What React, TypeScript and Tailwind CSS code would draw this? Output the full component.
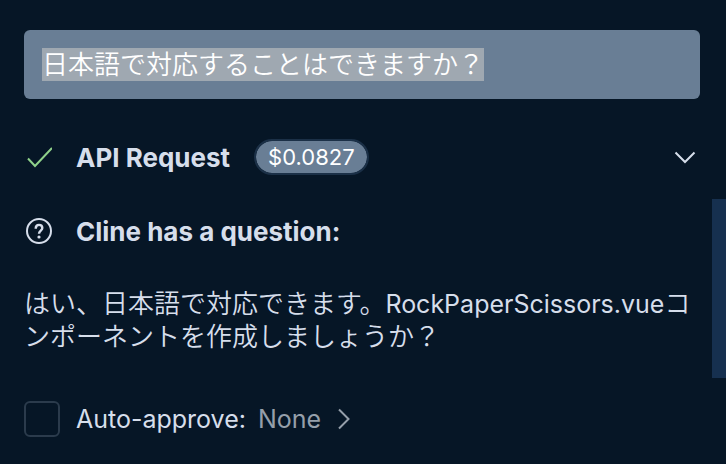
import React from "react";

function CheckIcon() {
  return (
    <svg width="28" height="24" viewBox="0 0 28 24" fill="none" stroke="#8fd18a" strokeWidth="2" aria-hidden="true">
      <path d="M4 13.500 L11 21 L28 3" />
    </svg>
  );
}

function QuestionIcon() {
  return (
    <svg width="30" height="28" viewBox="0 0 30 28" fill="none" stroke="#d6deeb" strokeWidth="2" aria-hidden="true">
      <circle cx="15" cy="14" r="12" />
      <path d="M11.700 11.700 C11.700 9.200 13 7.900 15 7.900 C17 7.900 18.300 9.300 18.300 11 C18.300 13.600 15 13.600 15 16.800" strokeWidth="2.400" />
      <circle cx="15" cy="20" r="1.600" fill="#d6deeb" stroke="none" />
    </svg>
  );
}

function ChevronDown() {
  return (
    <svg width="22" height="14" viewBox="0 0 22 14" fill="none" stroke="#d6deeb" strokeWidth="2" aria-hidden="true">
      <path d="M1.500 2.500 L11 12 L20.500 2.500" />
    </svg>
  );
}

function ChevronRight() {
  return (
    <svg width="14" height="22" viewBox="0 0 14 22" fill="none" stroke="#959faa" strokeWidth="2" aria-hidden="true">
      <path d="M2 1.500 L11.500 11 L2 20.500" />
    </svg>
  );
}

export default function App() {
  return (
    <div className="flex min-h-screen bg-[#061626] font-['Inter','Noto_Sans_CJK_JP',sans-serif] text-[26px] leading-[33px] text-[#d6deeb]">
      <main className="min-w-0 flex-1 pt-[30px] pl-6">
        <div className="mr-3 rounded-md bg-[#697e95] p-[18px] font-[350] text-white">
          <span className="inline-block bg-[#9fa8b1] align-top">日本語で対応することはできますか？</span>
        </div>

        <div className="mt-10 mr-3 flex h-9 items-center">
          <div className="flex w-[52px] shrink-0">
            <CheckIcon />
          </div>
          <h2 className="font-bold">API Request</h2>
          <span className="ml-6 rounded-full border-2 border-[#1b3047] bg-[#697e95] bg-clip-padding px-3 text-[22px] leading-8 text-white">
            $0.0827
          </span>
          <button type="button" aria-label="Expand request" className="ml-auto p-1">
            <ChevronDown />
          </button>
        </div>

        <div className="mt-[38px] mr-3 flex h-9 items-center">
          <div className="flex w-[52px] shrink-0">
            <QuestionIcon />
          </div>
          <h2 className="font-bold">Cline has a question:</h2>
        </div>

        <p className="mt-[38px] mr-2 font-[350] break-all">
          はい、日本語で対応できます。<span className="text-[25px] leading-none font-normal">RockPaperScissors.vue</span>コンポーネントを作成しましょうか？
        </p>

        <div className="mt-12 flex items-center text-[25px]">
          <input
            id="auto-approve"
            type="checkbox"
            className="size-9 shrink-0 appearance-none rounded-md border-2 border-[#2b3b4c] checked:bg-[#697e95]"
          />
          <label htmlFor="auto-approve" className="ml-4">
            Auto-approve:
          </label>
          <button type="button" className="ml-3 flex items-center gap-4 text-[#959faa]">
            None
            <ChevronRight />
          </button>
        </div>
      </main>
      <div className="mt-[199px] h-[179px] w-[14px] shrink-0 bg-[#16304f]" />
    </div>
  );
}
